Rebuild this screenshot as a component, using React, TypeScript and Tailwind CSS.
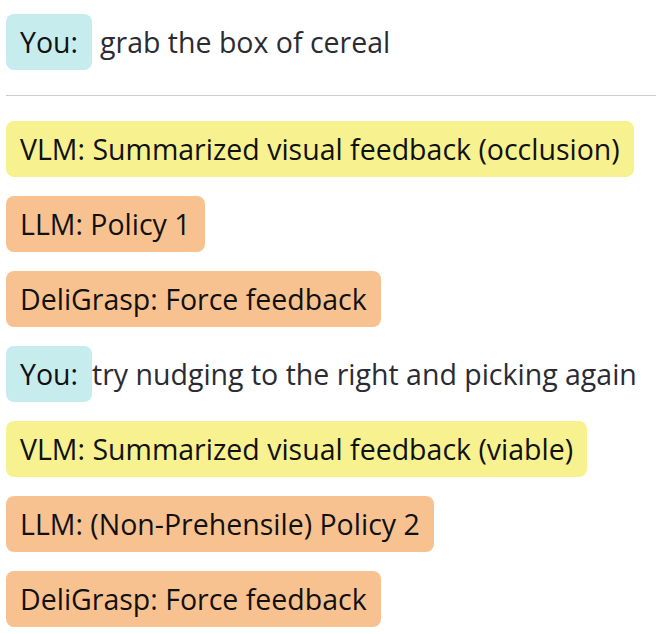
const font = { fontFamily: '"Segoe UI", "Open Sans", "Noto Sans", sans-serif' };

type Msg = { who: "you" | "vlm" | "llm" | "grasp"; label: string; text?: string };

const rows: Msg[] = [
  { who: "vlm", label: "VLM: Summarized visual feedback (occlusion)" },
  { who: "llm", label: "LLM: Policy 1" },
  { who: "grasp", label: "DeliGrasp: Force feedback" },
  { who: "you", label: "You:", text: "try nudging to the right and picking again" },
  { who: "vlm", label: "VLM: Summarized visual feedback (viable)" },
  { who: "llm", label: "LLM: (Non-Prehensile) Policy 2" },
  { who: "grasp", label: "DeliGrasp: Force feedback" },
];

function Bubble({ who, children }: { who: Msg["who"]; children: React.ReactNode }) {
  const bg =
    who === "you" ? "bg-[#c6ecee]" : who === "vlm" ? "bg-[#f7f28f]" : "bg-[#f8c290]";
  return (
    <div className={`${bg} h-[56px] px-[14px] rounded-lg flex items-center text-[#111] whitespace-nowrap`}>
      {children}
    </div>
  );
}

export default function App() {
  return (
    <div className="w-[656px] h-[634px] bg-white overflow-hidden pl-[6px] pt-[14px] text-[28.5px]" style={font}>
      <div className="flex items-center">
        <Bubble who="you">You:</Bubble>
        <span className="ml-[8px] text-[#2b2b33]">grab the box of cereal</span>
      </div>
      <div className="h-px bg-[#cccccc] mt-[25px] mb-[25px]" />
      <div className="flex flex-col gap-[19px]">
        {rows.map((r, i) => (
          <div key={i} className="flex items-center">
            <Bubble who={r.who}>{r.label}</Bubble>
            {r.text && <span className="text-[#2b2b33] whitespace-nowrap">{r.text}</span>}
          </div>
        ))}
      </div>
    </div>
  );
}
